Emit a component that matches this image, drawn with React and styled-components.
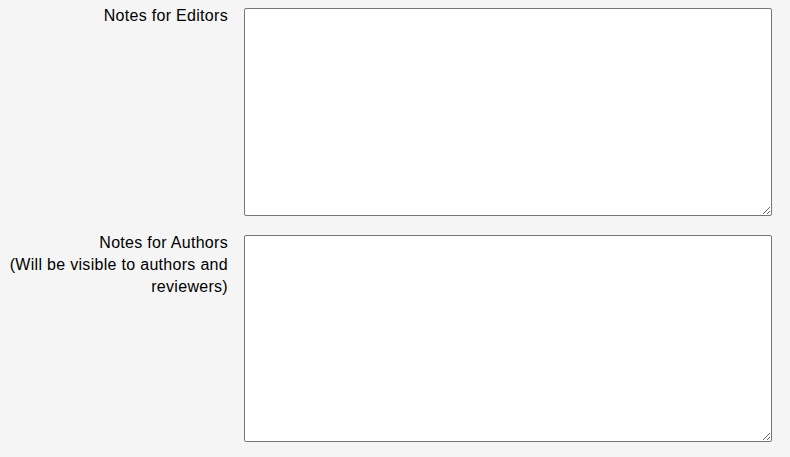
import React from 'react';
import styled, { createGlobalStyle } from 'styled-components';

const GlobalStyle = createGlobalStyle`
  html, body {
    margin: 0;
    background-color: #f5f5f5;
  }
`;

const Form = styled.div`
  display: flex;
  flex-direction: column;
  gap: 16px;
  padding-top: 5px;
  font-family: "Liberation Sans", Arial, sans-serif;
  font-size: 16px;
  line-height: 22px;
  color: #000;
`;

const Row = styled.div`
  display: grid;
  grid-template-columns: 228px 528px;
  column-gap: 16px;
  align-items: start;
`;

const Label = styled.label`
  text-align: right;
  letter-spacing: 0.3px;
`;

const Note = styled.span`
  display: block;
`;

const TextArea = styled.textarea`
  box-sizing: border-box;
  width: 528px;
  height: ${({ $h }) => $h}px;
  margin: 3px 0 0;
  padding: 2px;
  border: 1px solid #767676;
  border-radius: 2px;
  background-color: #fff;
  font-family: "Liberation Sans", Arial, sans-serif;
  font-size: 14px;
  resize: both;
`;

const fields = [
  { id: 'editors', label: 'Notes for Editors', h: 208 },
  { id: 'authors', label: 'Notes for Authors', note: '(Will be visible to authors and reviewers)', h: 207 },
];

export default function App() {
  return (
    <>
      <GlobalStyle />
      <Form>
        {fields.map(({ id, label, note, h }) => (
          <Row key={id}>
            <Label htmlFor={id}>
              {label}
              {note && <Note>{note}</Note>}
            </Label>
            <TextArea id={id} $h={h} />
          </Row>
        ))}
      </Form>
    </>
  );
}
